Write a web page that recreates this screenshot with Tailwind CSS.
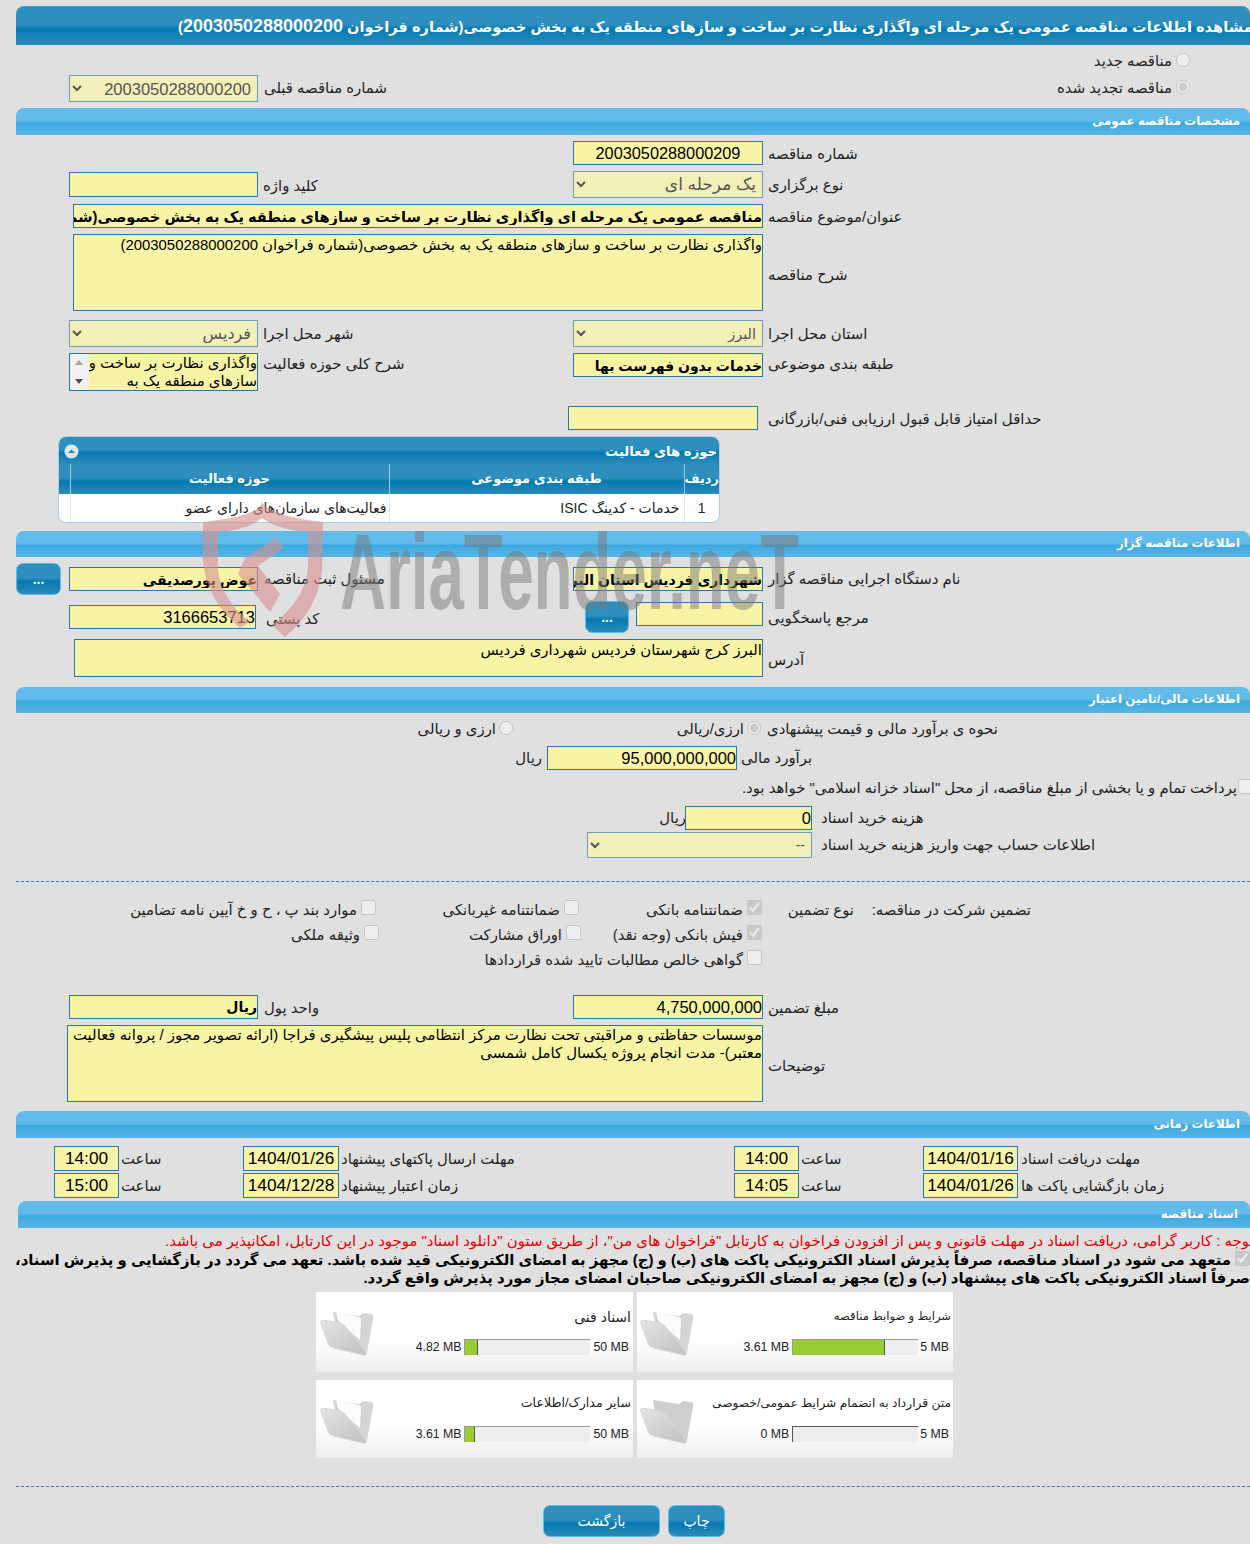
<!DOCTYPE html>
<html lang="fa" dir="rtl">
<head>
  <meta charset="UTF-8">
  <title>مشاهده اطلاعات مناقصه</title>
  <script src="https://cdn.jsdelivr.net/npm/@tailwindcss/browser@4"></script>
</head>
<body class="bg-[#e0e0e0] text-[#222] text-[14.9px] [font-family:'Liberation_Sans','DejaVu_Sans',sans-serif]">
<div class="relative w-[1250px] h-[1544px] overflow-hidden pt-[6px]">

  <!-- title -->
  <div dir="ltr" class="ml-[16px] h-[39px] flex items-center overflow-hidden rounded-t-[8px] border-t border-[#3a9ad0] bg-[linear-gradient(#2e8fbe_0%,#2e8fbe_46%,#0479b0_58%,#2d8cba_100%)]">
    <div dir="rtl" class="ml-[162px] shrink-0 whitespace-nowrap text-white font-bold text-[14.6px]">مشاهده اطلاعات مناقصه عمومی یک مرحله ای واگذاری نظارت بر ساخت و سازهای منطقه یک به بخش خصوصی(شماره فراخوان <span class="text-[18px]">2003050288000200</span>)</div>
  </div>

  <!-- tender kind -->
  <div class="h-[30px] flex items-center pr-[60px] pt-[3px]">
    <input type="radio" disabled class="w-[14px] h-[14px] m-0 mb-[3px]">
    <span class="mr-[4px]">مناقصه جدید</span>
  </div>
  <div class="h-[27px] flex items-center">
    <div class="w-[992px] flex items-center justify-between pr-[60px] pl-[6px]">
      <div class="flex items-center">
        <input type="radio" checked disabled class="w-[14px] h-[14px] m-0 mb-[3px]">
        <span class="mr-[4px]">مناقصه تجدید شده</span>
      </div>
      <span>شماره مناقصه قبلی</span>
    </div>
    <select disabled class="w-[189px] h-[27px] border border-[#6f9db8] bg-[#f2f0b8] text-[#555] text-[16.5px] pr-[2px]"><option>2003050288000200</option></select>
  </div>

  <!-- general -->
  <div class="mt-[6px] ml-[16px] h-[27px] rounded-t-[8px] flex items-center pr-[10px] text-white font-bold text-[11.8px] bg-[linear-gradient(#62bbe9_0%,#62bbe9_46%,#3ba9e0_56%,#5ab6e6_100%)]">مشخصات مناقصه عمومی</div>

  <div class="mt-[6px] h-[24px] grid grid-cols-[487px_190px] items-center">
    <span class="text-left pl-[5px] pt-[2px]">شماره مناقصه</span>
    <input readonly value="2003050288000209" class="h-[24px] pt-[1px] border border-[#2a78ab] bg-[#f7f5a5] text-black text-center text-[16.3px]">
  </div>
  <div class="mt-[6px] h-[27px] grid grid-cols-[487px_190px_315px_189px] items-center">
    <span class="text-left pl-[5px] pt-[2px]">نوع برگزاری</span>
    <select disabled class="h-[27px] border border-[#6f9db8] bg-[#f2f0b8] text-[#555] text-[17px] pr-[2px]"><option>یک مرحله ای</option></select>
    <span class="text-left pl-[5px] pt-[3px]">کلید واژه</span>
    <input readonly class="h-[25px] border border-[#2a78ab] bg-[#f7f5a5]">
  </div>
  <div class="mt-[6px] h-[24px] grid grid-cols-[487px_690px] items-center">
    <span class="text-left pl-[5px] pt-[2px]">عنوان/موضوع مناقصه</span>
    <input readonly value="مناقصه عمومی یک مرحله ای واگذاری نظارت بر ساخت و سازهای منطقه یک به بخش خصوصی(شماره فراخوان 2003050288000200)" class="h-[24px] pt-[1px] border border-[#2a78ab] bg-[#f7f5a5] text-black font-bold text-[14.6px]">
  </div>
  <div class="mt-[6px] h-[77px] grid grid-cols-[487px_690px] items-center">
    <span class="text-left pl-[5px] mt-[5px]">شرح مناقصه</span>
    <textarea readonly class="h-[77px] border border-[#2a78ab] bg-[#f7f5a5] text-black leading-[20px] resize-none overflow-hidden">واگذاری نظارت بر ساخت و سازهای منطقه یک به بخش خصوصی(شماره فراخوان 2003050288000200)</textarea>
  </div>
  <div class="mt-[9px] h-[27px] grid grid-cols-[487px_190px_315px_189px] items-center">
    <span class="text-left pl-[5px] pt-[2px]">استان محل اجرا</span>
    <select disabled class="h-[27px] border border-[#6f9db8] bg-[#f2f0b8] text-[#555] text-[14.5px] pr-[2px]"><option>البرز</option></select>
    <span class="text-left pl-[5px] pt-[2px]">شهر محل اجرا</span>
    <select disabled class="h-[27px] border border-[#6f9db8] bg-[#f2f0b8] text-[#555] text-[16px] pr-[2px]"><option>فردیس</option></select>
  </div>
  <div class="mt-[6px] h-[38px] grid grid-cols-[487px_190px_315px_189px] items-start">
    <span class="text-left pl-[5px]">طبقه بندی موضوعی</span>
    <input readonly value="خدمات بدون فهرست بها" class="h-[24px] pt-[1px] border border-[#2a78ab] bg-[#f7f5a5] text-black font-bold text-[14px]">
    <span class="text-left pl-[5px]">شرح کلی حوزه فعالیت</span>
    <div class="h-[38px] flex border border-[#2a78ab] bg-[#f7f5a5] overflow-hidden">
      <div class="flex-1 text-black leading-[18px] whitespace-nowrap">واگذاری نظارت بر ساخت و<br>سازهای منطقه یک به</div>
      <div class="w-[22px] flex flex-col items-center justify-between bg-[#f1f1f1] py-[6px]">
        <span class="w-0 h-0 border-x-[4px] border-x-transparent border-b-[5px] border-b-[#a3a3a3]"></span>
        <span class="w-0 h-0 border-x-[4px] border-x-transparent border-t-[5px] border-t-[#505050]"></span>
      </div>
    </div>
  </div>
  <div class="mt-[15px] h-[24px] grid grid-cols-[492px_190px] items-center">
    <span class="text-left pl-[10px] pt-[2px]">حداقل امتیاز قابل قبول ارزیابی فنی/بازرگانی</span>
    <input readonly class="h-[24px] border border-[#2a78ab] bg-[#f7f5a5]">
  </div>

  <!-- activity table -->
  <div class="mt-[6px] mr-[530px] w-[662px] h-[87px] rounded-[8px] border border-[#a9cde6] bg-white overflow-hidden">
    <div class="h-[27px] pt-[2px] flex items-center justify-between pr-[2px] pl-[5px] text-white font-bold text-[13.2px] bg-[linear-gradient(#2e8fbe_0%,#2e8fbe_46%,#0479b0_58%,#2d8cba_100%)]">
      <span>حوزه های فعالیت</span>
      <svg width="15" height="15" viewBox="0 0 15 15"><circle cx="7.5" cy="7.5" r="7" fill="#dbe7f0"/><path d="M4 9 L7.5 5.5 L11 9 Z" fill="#2b7fae"/></svg>
    </div>
    <table class="w-full table-fixed border-collapse">
      <thead>
        <tr class="h-[30px] text-white font-bold text-[13px] bg-[linear-gradient(#2e8fbe_0%,#2e8fbe_46%,#0479b0_58%,#2d8cba_100%)]">
          <th class="w-[35px] border-l border-[#9cc8e2] font-bold">ردیف</th>
          <th class="w-[295px] border-l border-[#9cc8e2] font-bold">طبقه بندی موضوعی</th>
          <th class="w-[319px] border-l border-[#9cc8e2] font-bold">حوزه فعالیت</th>
          <th></th>
        </tr>
      </thead>
      <tbody>
        <tr class="h-[28px] text-[14px]">
          <td class="border-l border-[#dde7ee] text-center">1</td>
          <td class="border-l border-[#dde7ee] pr-[4px]">خدمات - کدینگ ISIC</td>
          <td class="border-l border-[#dde7ee] pr-[2px]">فعالیت‌های سازمان‌های دارای عضو</td>
          <td></td>
        </tr>
      </tbody>
    </table>
  </div>

  <!-- organiser -->
  <div class="mt-[8px] ml-[16px] h-[26px] rounded-t-[8px] flex items-center pr-[10px] text-white font-bold text-[11.8px] bg-[linear-gradient(#62bbe9_0%,#62bbe9_46%,#3ba9e0_56%,#5ab6e6_100%)]">اطلاعات مناقصه گزار</div>

  <div class="mt-[6px] h-[32px] grid grid-cols-[487px_190px_315px_189px_8px_45px] items-center">
    <span class="text-left pl-[5px]">نام دستگاه اجرایی مناقصه گزار</span>
    <input readonly value="شهرداری فردیس استان البرز" class="h-[24px] pt-[1px] border border-[#2a78ab] bg-[#f7f5a5] text-black font-bold text-[14px]">
    <span class="text-left pl-[6px]">مسئول ثبت مناقصه</span>
    <input readonly value="عوض پورصدیقی" class="h-[24px] pt-[1px] border border-[#2a78ab] bg-[#f7f5a5] text-black font-bold text-[14px]">
    <span></span>
    <button class="h-[32px] rounded-[7px] border-[1.5px] border-[#5bbde8] text-white text-[14px] font-bold bg-[linear-gradient(#2e8fbe_0%,#2e8fbe_46%,#0479b0_58%,#2d8cba_100%)]">...</button>
  </div>
  <div class="mt-[6px] h-[32px] grid grid-cols-[487px_127px_7px_44px_329px_187px] items-start">
    <span class="text-left pl-[5px] mt-[6px]">مرجع پاسخگویی</span>
    <input readonly class="mt-[1px] h-[24px] border border-[#2a78ab] bg-[#f7f5a5]">
    <span></span>
    <button class="h-[32px] rounded-[7px] border-[1.5px] border-[#5bbde8] text-white text-[14px] font-bold bg-[linear-gradient(#2e8fbe_0%,#2e8fbe_46%,#0479b0_58%,#2d8cba_100%)]">...</button>
    <span class="text-left pl-[10px] mt-[7px]">کد پستی</span>
    <input readonly value="3166653713" class="mt-[4px] h-[24px] border border-[#2a78ab] bg-[#f7f5a5] text-black text-[16.5px]">
  </div>
  <div class="mt-[6px] h-[38px] grid grid-cols-[487px_689px] items-center">
    <span class="text-left pl-[5px] mt-[5px]">آدرس</span>
    <textarea readonly class="h-[38px] border border-[#2a78ab] bg-[#f7f5a5] text-black leading-[20px] resize-none overflow-hidden">البرز کرج شهرستان فردیس شهرداری فردیس</textarea>
  </div>

  <!-- finance -->
  <div class="mt-[10px] ml-[16px] h-[26px] rounded-t-[8px] flex items-center pr-[10px] text-white font-bold text-[11.8px] bg-[linear-gradient(#62bbe9_0%,#62bbe9_46%,#3ba9e0_56%,#5ab6e6_100%)]">اطلاعات مالی/تامین اعتبار</div>

  <div class="mt-[6px] h-[27px] pb-[6px] flex items-center">
    <span class="w-[489px] text-left pl-[6px]">نحوه ی برآورد مالی و قیمت پیشنهادی</span>
    <input type="radio" checked disabled class="w-[14px] h-[14px] m-0 mb-[3px]">
    <span class="mr-[3px] w-[231px]">ارزی/ریالی</span>
    <input type="radio" disabled class="w-[14px] h-[14px] m-0 mb-[3px]">
    <span class="mr-[3px]">ارزی و ریالی</span>
  </div>
  <div class="h-[24px] grid grid-cols-[513px_190px_auto] items-center">
    <span class="text-left pl-[4px]">برآورد مالی</span>
    <input readonly value="95,000,000,000" class="h-[24px] border border-[#2a78ab] bg-[#f7f5a5] text-black text-[16.5px]">
    <span class="mr-[5px]">ریال</span>
  </div>
  <div class="mt-[8px] h-[20px] flex items-center">
    <input type="checkbox" disabled class="w-[15px] h-[15px] m-0 -mr-[3px] mb-[3px]">
    <span class="mr-[1px]">پرداخت تمام و یا بخشی از مبلغ مناقصه، از محل "اسناد خزانه اسلامی" خواهد بود.</span>
  </div>
  <div class="mt-[8px] h-[24px] grid grid-cols-[438px_127px_auto] items-center">
    <span class="text-left pl-[9px]">هزینه خرید اسناد</span>
    <input readonly value="0" class="h-[24px] border border-[#2a78ab] bg-[#f7f5a5] text-black text-[16.5px]">
    <span class="-mr-[1px]">ریال</span>
  </div>
  <div class="mt-[2px] h-[26px] grid grid-cols-[438px_225px] items-center">
    <span class="text-left pl-[9px]">اطلاعات حساب جهت واریز هزینه خرید اسناد</span>
    <select disabled class="h-[26px] border border-[#6f9db8] bg-[#f2f0b8] text-[#555] text-[14px] pr-[2px]"><option>--</option></select>
  </div>

  <div class="mt-[23px] ml-[16px] border-t border-dashed border-[#1f86c0]"></div>

  <!-- guarantee -->
  <div class="mt-[18px] h-[20px] flex items-center pr-[219px]">
    <span class="w-[177px]">تضمین شرکت در مناقصه:</span>
    <span class="w-[92px]">نوع تضمین</span>
    <input type="checkbox" checked disabled class="w-[15px] h-[15px] m-0 mb-[6px]">
    <span class="w-[164px] mr-[4px]">ضمانتنامه بانکی</span>
    <input type="checkbox" disabled class="w-[15px] h-[15px] m-0 mb-[6px]">
    <span class="w-[184px] mr-[4px]">ضمانتنامه غیربانکی</span>
    <input type="checkbox" disabled class="w-[15px] h-[15px] m-0 mb-[6px]">
    <span class="mr-[4px]">موارد بند پ ، ح و خ آیین نامه تضامین</span>
  </div>
  <div class="mt-[5px] h-[20px] flex items-center pr-[488px]">
    <input type="checkbox" checked disabled class="w-[15px] h-[15px] m-0 mb-[6px]">
    <span class="w-[162px] mr-[4px]">فیش بانکی (وجه نقد)</span>
    <input type="checkbox" disabled class="w-[15px] h-[15px] m-0 mb-[6px]">
    <span class="w-[183px] mr-[4px]">اوراق مشارکت</span>
    <input type="checkbox" disabled class="w-[15px] h-[15px] m-0 mb-[6px]">
    <span class="mr-[4px]">وثیقه ملکی</span>
  </div>
  <div class="mt-[5px] h-[20px] flex items-center pr-[488px]">
    <input type="checkbox" disabled class="w-[15px] h-[15px] m-0 mb-[6px]">
    <span class="mr-[4px]">گواهی خالص مطالبات تایید شده قراردادها</span>
  </div>

  <div class="mt-[25px] h-[24px] grid grid-cols-[487px_190px_315px_189px] items-center">
    <span class="text-left pl-[5px] pt-[2px]">مبلغ تضمین</span>
    <input readonly value="4,750,000,000" class="h-[24px] border border-[#2a78ab] bg-[#f7f5a5] text-black text-[16.5px]">
    <span class="text-left pl-[6px] pt-[2px]">واحد پول</span>
    <input readonly value="ریال" class="h-[24px] border border-[#2a78ab] bg-[#f7f5a5] text-black font-bold text-[14px]">
  </div>
  <div class="mt-[6px] h-[77px] grid grid-cols-[487px_696px] items-center">
    <span class="text-left pl-[5px] mt-[5px]">توضیحات</span>
    <textarea readonly class="h-[77px] border border-[#2a78ab] bg-[#f7f5a5] text-black leading-[18px] resize-none overflow-hidden">موسسات حفاظتی و مراقبتی تحت نظارت مرکز انتظامی پلیس پیشگیری فراجا (ارائه تصویر مجوز / پروانه فعالیت معتبر)- مدت انجام پروژه یکسال کامل شمسی</textarea>
  </div>

  <!-- dates -->
  <div class="mt-[9px] ml-[16px] h-[27px] rounded-t-[8px] flex items-center pr-[10px] text-white font-bold text-[11.8px] bg-[linear-gradient(#62bbe9_0%,#62bbe9_46%,#3ba9e0_56%,#5ab6e6_100%)]">اطلاعات زمانی</div>

  <div class="mt-[8px] grid grid-cols-[150px_95px_124px_65px_208px_187px_96px_124px_65px] h-[25px] items-center pr-[82px]">
    <span class="text-left pl-[3px] pt-[2px]">مهلت دریافت اسناد</span>
    <input readonly value="1404/01/16" class="h-[25px] pt-[1px] w-full border border-[#2a78ab] bg-[#f7f5a5] text-black text-center text-[17.3px]">
    <span class="text-left pl-[2px] pt-[2px]">ساعت</span>
    <input readonly value="14:00" class="h-[25px] pt-[1px] w-full border border-[#2a78ab] bg-[#f7f5a5] text-black text-center text-[17.3px]">
    <span></span>
    <span class="text-left pl-[2px] pt-[2px]">مهلت ارسال پاکتهای پیشنهاد</span>
    <input readonly value="1404/01/26" class="h-[25px] pt-[1px] w-full border border-[#2a78ab] bg-[#f7f5a5] text-black text-center text-[17.3px]">
    <span class="text-left pl-[2px] pt-[2px]">ساعت</span>
    <input readonly value="14:00" class="h-[25px] pt-[1px] w-full border border-[#2a78ab] bg-[#f7f5a5] text-black text-center text-[17.3px]">
  </div>
  <div class="mt-[2px] grid grid-cols-[150px_95px_124px_65px_208px_187px_96px_124px_65px] h-[25px] items-center pr-[82px]">
    <span class="text-left pl-[3px] pt-[2px]">زمان بازگشایی پاکت ها</span>
    <input readonly value="1404/01/26" class="h-[25px] pt-[1px] w-full border border-[#2a78ab] bg-[#f7f5a5] text-black text-center text-[17.3px]">
    <span class="text-left pl-[2px] pt-[2px]">ساعت</span>
    <input readonly value="14:05" class="h-[25px] pt-[1px] w-full border border-[#2a78ab] bg-[#f7f5a5] text-black text-center text-[17.3px]">
    <span></span>
    <span class="text-left pl-[2px] pt-[2px]">زمان اعتبار پیشنهاد</span>
    <input readonly value="1404/12/28" class="h-[25px] pt-[1px] w-full border border-[#2a78ab] bg-[#f7f5a5] text-black text-center text-[17.3px]">
    <span class="text-left pl-[2px] pt-[2px]">ساعت</span>
    <input readonly value="15:00" class="h-[25px] pt-[1px] w-full border border-[#2a78ab] bg-[#f7f5a5] text-black text-center text-[17.3px]">
  </div>

  <!-- documents -->
  <div class="mt-[3px] ml-[18px] h-[27px] rounded-t-[8px] flex items-center pr-[12px] text-white font-bold text-[11.8px] bg-[linear-gradient(#62bbe9_0%,#62bbe9_46%,#3ba9e0_56%,#5ab6e6_100%)]">اسناد مناقصه</div>

  <div dir="ltr" class="mt-[3px] h-[20px] flex items-center overflow-hidden">
    <span dir="rtl" class="ml-[165px] shrink-0 whitespace-nowrap text-[#e00000]">توجه : کاربر گرامی، دریافت اسناد در مهلت قانونی و پس از افزودن فراخوان به کارتابل "فراخوان های من"، از طریق ستون "دانلود اسناد" موجود در این کارتابل، امکانپذیر می باشد.</span>
  </div>
  <div class="h-[18px] flex items-center">
    <input type="checkbox" checked disabled class="w-[15px] h-[15px] m-0 mb-[3px]">
    <span class="mr-[4px] whitespace-nowrap font-bold text-black">متعهد می شود در اسناد مناقصه، صرفاً پذیرش اسناد الکترونیکی پاکت های (ب) و (ج) مجهز به امضای الکترونیکی قید شده باشد. تعهد می گردد در بازگشایی و پذیرش اسناد،</span>
  </div>
  <div class="h-[18px] flex items-center whitespace-nowrap font-bold text-black">صرفاً اسناد الکترونیکی پاکت های پیشنهاد (ب) و (ج) مجهز به امضای الکترونیکی صاحبان امضای مجاز مورد پذیرش واقع گردد.</div>

  <div class="mt-[5px] mr-[297px] w-[637px] grid grid-cols-[316px_317px] gap-x-[4px] gap-y-[8px] text-[12.2px]">
    <div class="h-[80px] flex bg-[linear-gradient(#ffffff_60%,#eeeeee_100%)]">
      <div class="w-[258px] pr-[2px] pt-[15px]">
        <div class="h-[18px] text-[11.6px]">شرایط و ضوابط مناقصه</div>
        <div class="mt-[14px] flex items-center h-[16px] text-[12.3px]">
          <span dir="ltr" class="mr-[2px] ml-[2px]">5 MB</span>
          <div dir="ltr" class="w-[126px] h-[16px] bg-[#eeeeee] border-t border-l border-[#9a9a9a] shrink-0"><div class="w-[73%] h-full bg-[#9acd32] border-r border-[#555]"></div></div>
          <span dir="ltr" class="mr-[3px] whitespace-nowrap">3.61 MB</span>
        </div>
      </div>
      <svg width="58" height="50" viewBox="0 0 58 50" class="mt-[18px] blur-[0.4px]"><defs><linearGradient id="flap" x1="0" y1="0" x2="0.6" y2="1"><stop offset="0" stop-color="#e4e4e4"/><stop offset="1" stop-color="#c6c6c6"/></linearGradient></defs><path d="M16 2 L42 6 L46 3 L54 4 Q57 5 56 9 L50 42 Q49 46 46 44 L20 25 Z" fill="#d5d5d5"/><path d="M18 0 L44 8 L43 30 L22 12 Z" fill="#fbfbfb"/><path d="M5 10 Q3 11 4 14 L11 33 Q12 37 17 38 L46 45 Q50 46 49 42 L28 16 Q26 14 23 13 Z" fill="url(#flap)" stroke="#d6d6d6"/></svg>
    </div>
    <div class="h-[80px] flex bg-[linear-gradient(#ffffff_60%,#eeeeee_100%)]">
      <div class="w-[258px] pr-[2px] pt-[15px]">
        <div class="h-[18px] text-[14px]">اسناد فنی</div>
        <div class="mt-[14px] flex items-center h-[16px] text-[12.3px]">
          <span dir="ltr" class="mr-[2px] ml-[3px]">50 MB</span>
          <div dir="ltr" class="w-[126px] h-[16px] bg-[#eeeeee] border-t border-l border-[#9a9a9a] shrink-0"><div class="w-[10%] h-full bg-[#9acd32] border-r border-[#555]"></div></div>
          <span dir="ltr" class="mr-[3px] whitespace-nowrap">4.82 MB</span>
        </div>
      </div>
      <svg width="58" height="50" viewBox="0 0 58 50" class="mt-[18px] blur-[0.4px]"><path d="M16 2 L42 6 L46 3 L54 4 Q57 5 56 9 L50 42 Q49 46 46 44 L20 25 Z" fill="#d5d5d5"/><path d="M18 0 L44 8 L43 30 L22 12 Z" fill="#fbfbfb"/><path d="M5 10 Q3 11 4 14 L11 33 Q12 37 17 38 L46 45 Q50 46 49 42 L28 16 Q26 14 23 13 Z" fill="url(#flap)" stroke="#d6d6d6"/></svg>
    </div>
    <div class="h-[78px] flex bg-[linear-gradient(#ffffff_60%,#eeeeee_100%)]">
      <div class="w-[258px] pr-[2px] pt-[14px]">
        <div class="h-[18px] whitespace-nowrap">متن قرارداد به انضمام شرایط عمومی/خصوصی</div>
        <div class="mt-[14px] flex items-center h-[16px] text-[12.3px]">
          <span dir="ltr" class="mr-[2px] ml-[2px]">5 MB</span>
          <div dir="ltr" class="w-[126px] h-[16px] bg-[#eeeeee] border-t border-l border-[#555] shrink-0"></div>
          <span dir="ltr" class="mr-[3px] whitespace-nowrap">0 MB</span>
        </div>
      </div>
      <svg width="58" height="50" viewBox="0 0 58 50" class="mt-[18px] blur-[0.4px]"><path d="M16 2 L42 6 L46 3 L54 4 Q57 5 56 9 L50 42 Q49 46 46 44 L20 25 Z" fill="#cfcfcf"/><path d="M5 10 Q3 11 4 14 L11 33 Q12 37 17 38 L46 45 Q50 46 49 42 L28 16 Q26 14 23 13 Z" fill="url(#flap)" stroke="#d6d6d6"/></svg>
    </div>
    <div class="h-[78px] flex bg-[linear-gradient(#ffffff_60%,#eeeeee_100%)]">
      <div class="w-[258px] pr-[2px] pt-[14px]">
        <div class="h-[18px] text-[12.6px]">سایر مدارک/اطلاعات</div>
        <div class="mt-[14px] flex items-center h-[16px] text-[12.3px]">
          <span dir="ltr" class="mr-[2px] ml-[3px]">50 MB</span>
          <div dir="ltr" class="w-[126px] h-[16px] bg-[#eeeeee] border-t border-l border-[#9a9a9a] shrink-0"><div class="w-[8%] h-full bg-[#9acd32] border-r border-[#555]"></div></div>
          <span dir="ltr" class="mr-[3px] whitespace-nowrap">3.61 MB</span>
        </div>
      </div>
      <svg width="58" height="50" viewBox="0 0 58 50" class="mt-[18px] blur-[0.4px]"><path d="M16 2 L42 6 L46 3 L54 4 Q57 5 56 9 L50 42 Q49 46 46 44 L20 25 Z" fill="#d5d5d5"/><path d="M18 0 L44 8 L43 30 L22 12 Z" fill="#fbfbfb"/><path d="M5 10 Q3 11 4 14 L11 33 Q12 37 17 38 L46 45 Q50 46 49 42 L28 16 Q26 14 23 13 Z" fill="url(#flap)" stroke="#d6d6d6"/></svg>
    </div>
  </div>

  <div class="mt-[28px] ml-[16px] border-t border-dashed border-[#1f86c0]"></div>

  <div class="mt-[18px] pr-[525px] flex gap-[8px]">
    <button class="w-[57px] h-[32px] rounded-[7px] border-[1.5px] border-[#5bbde8] text-white text-[14px] bg-[linear-gradient(#2e8fbe_0%,#2e8fbe_46%,#0479b0_58%,#2d8cba_100%)]">چاپ</button>
    <button class="w-[117px] h-[32px] rounded-[7px] border-[1.5px] border-[#5bbde8] text-white text-[14px] bg-[linear-gradient(#2e8fbe_0%,#2e8fbe_46%,#0479b0_58%,#2d8cba_100%)]">بازگشت</button>
  </div>

  <!-- watermark -->
  <div dir="ltr" class="absolute left-[200px] top-[500px] w-[620px] h-[140px] pointer-events-none">
    <svg width="126" height="138" viewBox="0 0 126 138" class="absolute left-0 top-0 opacity-60">
      <path d="M3 22 Q60 16 62 2 Q70 16 123 22 L122 70 Q118 110 85 137 L72 125 Q105 100 108 68 L108 32 Q78 30 62 18 Q48 30 18 32 L18 70 Q22 100 50 122 L40 128 Q6 100 3 60 Z" fill="#d98f8f"/>
      <path d="M45 58 L76 38 L84 48 L58 66 L80 94 L70 112 L38 74 Z" fill="#d98f8f"/>
    </svg>
    <div class="absolute left-[140px] top-[12px] origin-left scale-x-[0.59] whitespace-nowrap text-[108px] leading-[120px] font-bold text-[#7a7a7a]/50">AriaTender.neT</div>
  </div>
</div>
</body>
</html>
